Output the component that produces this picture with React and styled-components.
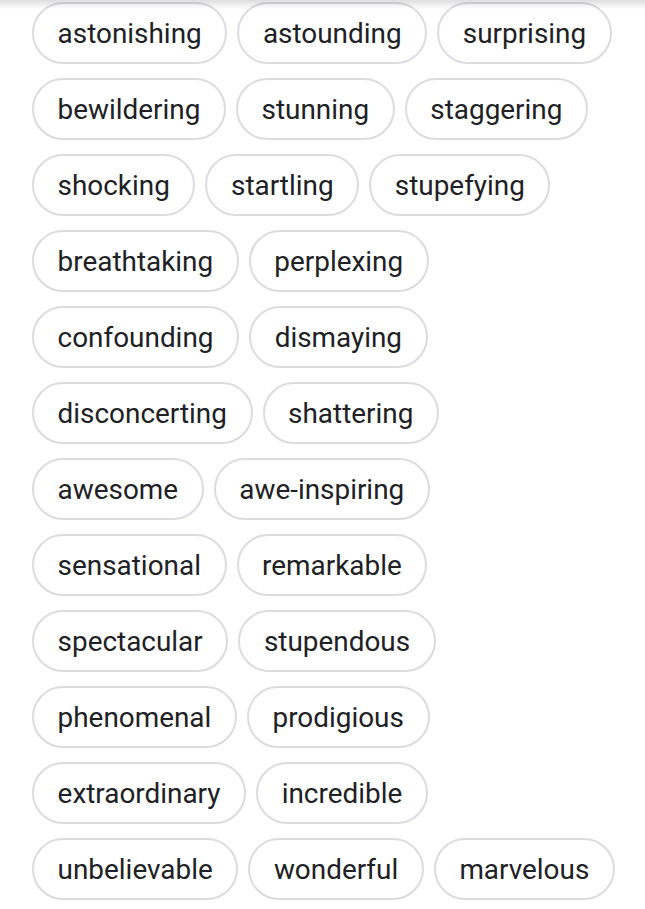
import React from 'react';
import styled, { createGlobalStyle } from 'styled-components';

const GlobalStyle = createGlobalStyle`
  html, body {
    margin: 0;
    padding: 0;
    background: #ffffff;
  }
  body {
    font-family: Roboto, "Noto Sans", Arial, sans-serif;
  }
`

// shadow from the header that sits above this list (cut off in the shot)
const TopShade = styled.div`
  position: fixed;
  top: 0;
  left: 0;
  right: 0;
  height: 9px;
  background: linear-gradient(to bottom, rgba(0,0,0,0.13), rgba(0,0,0,0));
  pointer-events: none;
  z-index: 2;
`

const List = styled.div`
  display: flex;
  flex-direction: column;
  gap: 14px;
  padding: 2px 0 0 32px;
  width: 645px;
  height: 909px;
  box-sizing: border-box;
  overflow: hidden;
`

const Row = styled.div`
  display: flex;
  gap: 10px;
`

const Chip = styled.div`
  box-sizing: border-box;
  height: 62px;
  display: flex;
  align-items: center;
  padding: 0 23.6px;
  border: 2px solid #dadce0;
  border-radius: 31px;
  background: #ffffff;
  color: #202124;
  font-size: 27.9px;
  white-space: nowrap;
`

const rows = [
  ['astonishing', 'astounding', 'surprising'],
  ['bewildering', 'stunning', 'staggering'],
  ['shocking', 'startling', 'stupefying'],
  ['breathtaking', 'perplexing'],
  ['confounding', 'dismaying'],
  ['disconcerting', 'shattering'],
  ['awesome', 'awe-inspiring'],
  ['sensational', 'remarkable'],
  ['spectacular', 'stupendous'],
  ['phenomenal', 'prodigious'],
  ['extraordinary', 'incredible'],
  ['unbelievable', 'wonderful', 'marvelous'],
];

export default function App() {
  return (
    <>
      <GlobalStyle />
      <TopShade />
      <List>
        {rows.map((words, i) => (
          <Row key={i}>
            {words.map((w) => (
              <Chip key={w}>{w}</Chip>
            ))}
          </Row>
        ))}
      </List>
    </>
  );
}
